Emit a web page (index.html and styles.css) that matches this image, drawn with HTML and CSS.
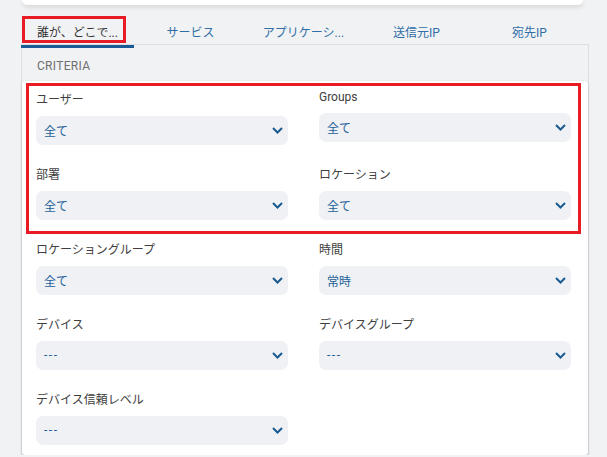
FILE: index.html
```html
<!DOCTYPE html>
<html>
<head>
<meta charset="utf-8">
<title>ポリシー条件</title>
<link rel="stylesheet" href="styles.css">
</head>
<body>
    <div class="topCard"></div>

    <div class="wrap">
        <!-- タブ -->
        <ul class="tabs">
            <li class="tab active">誰が、どこで...<span class="mark tabMark"></span></li>
            <li class="tab">サービス</li>
            <li class="tab">アプリケーシ...</li>
            <li class="tab">送信元IP</li>
            <li class="tab">宛先IP</li>
        </ul>

        <div class="panel">
            <div class="panelTitle">CRITERIA</div>

            <div class="card">
                <span class="mark cardMark"></span>
                <div class="fields">
                    <div class="field">
                        <label>ユーザー</label>
                        <div class="select"><span>全て</span><svg viewBox="0 0 11 7"><path d="M1 1l4.5 4.5L10 1"/></svg></div>
                    </div>
                    <div class="field">
                        <label>Groups</label>
                        <div class="select"><span>全て</span><svg viewBox="0 0 11 7"><path d="M1 1l4.5 4.5L10 1"/></svg></div>
                    </div>
                    <div class="field">
                        <label>部署</label>
                        <div class="select"><span>全て</span><svg viewBox="0 0 11 7"><path d="M1 1l4.5 4.5L10 1"/></svg></div>
                    </div>
                    <div class="field">
                        <label>ロケーション</label>
                        <div class="select"><span>全て</span><svg viewBox="0 0 11 7"><path d="M1 1l4.5 4.5L10 1"/></svg></div>
                    </div>
                    <div class="field">
                        <label>ロケーショングループ</label>
                        <div class="select"><span>全て</span><svg viewBox="0 0 11 7"><path d="M1 1l4.5 4.5L10 1"/></svg></div>
                    </div>
                    <div class="field">
                        <label>時間</label>
                        <div class="select"><span>常時</span><svg viewBox="0 0 11 7"><path d="M1 1l4.5 4.5L10 1"/></svg></div>
                    </div>
                    <div class="field">
                        <label>デバイス</label>
                        <div class="select"><span class="none">---</span><svg viewBox="0 0 11 7"><path d="M1 1l4.5 4.5L10 1"/></svg></div>
                    </div>
                    <div class="field">
                        <label>デバイスグループ</label>
                        <div class="select"><span class="none">---</span><svg viewBox="0 0 11 7"><path d="M1 1l4.5 4.5L10 1"/></svg></div>
                    </div>
                    <div class="field">
                        <label>デバイス信頼レベル</label>
                        <div class="select"><span class="none">---</span><svg viewBox="0 0 11 7"><path d="M1 1l4.5 4.5L10 1"/></svg></div>
                    </div>
                </div>
            </div>
        </div>
    </div>
</body>
</html>
```

FILE: styles.css
```css
ul,li{
   margin: 0;
   padding: 0;
   list-style: none;
}
body{
   margin: 0;
   background: #f1f2f4;
   font-family: Roboto, "Noto Sans CJK JP", sans-serif;
   font-size: 12px;
   color: #333;
}
/* 上のカード（端だけ見えている） */
.topCard{
   height: 5px;
   margin: 0 24px 0 22px;
   background: #fff;
   border-radius: 0 0 6px 6px;
   box-shadow: 0 2px 5px rgba(0,0,0,0.13);
}
.wrap{
   width: 568px;
   margin: 12px 0 0 21px;
}
/* タブ */
.tabs{
   display: flex;
   position: relative;
   z-index: 1;
   margin-bottom: -4px;
}
.tab{
   position: relative;
   width: 113px;
   height: 28px;
   display: flex;
   align-items: center;
   justify-content: center;
   color: #2f6ea8;
   border-bottom: 3px solid transparent;
   white-space: nowrap;
}
.tab.active{
   color: #333;
   border-bottom-color: #1b5b95;
}
/* 赤い注釈枠 */
.mark{
   position: absolute;
   border: 3px solid #e81c24;
   box-sizing: border-box;
}
.tabMark{
   top: -1px;
   left: 1px;
   width: 104px;
   height: 27px;
}
.panel{
   border: 1px solid #dcdee2;
   border-bottom: none;
}
.panelTitle{
   height: 36px;
   box-sizing: border-box;
   padding: 14px 0 0 15px;
   font-size: 12px;
   line-height: 14px;
   letter-spacing: 0.3px;
   color: #6f6f6f;
}
.card{
   position: relative;
   background: #fff;
   border-radius: 4px;
   box-shadow: 0 1px 3px rgba(0,0,0,0.18);
   padding: 9px 16px 10px 14px;
}
.cardMark{
   top: 2px;
   left: 4px;
   width: 555px;
   height: 151px;
}
.fields{
   display: grid;
   grid-template-columns: 252px 252px;
   column-gap: 31px;
   row-gap: 20.5px;
}
.field label{
   display: block;
   line-height: normal;
   margin-bottom: 9px;
   color: #404040;
}
.select{
   height: 28.5px;
   display: flex;
   align-items: center;
   justify-content: space-between;
   padding: 0 5px 0 8px;
   background: #eff1f4;
   border-radius: 7px;
   color: #1f5f98;
}
.select .none{
   letter-spacing: 1.5px;
}
.select svg{
   width: 11px;
   height: 7px;
   fill: none;
   stroke: #1b5b8f;
   stroke-width: 2;
}
```
